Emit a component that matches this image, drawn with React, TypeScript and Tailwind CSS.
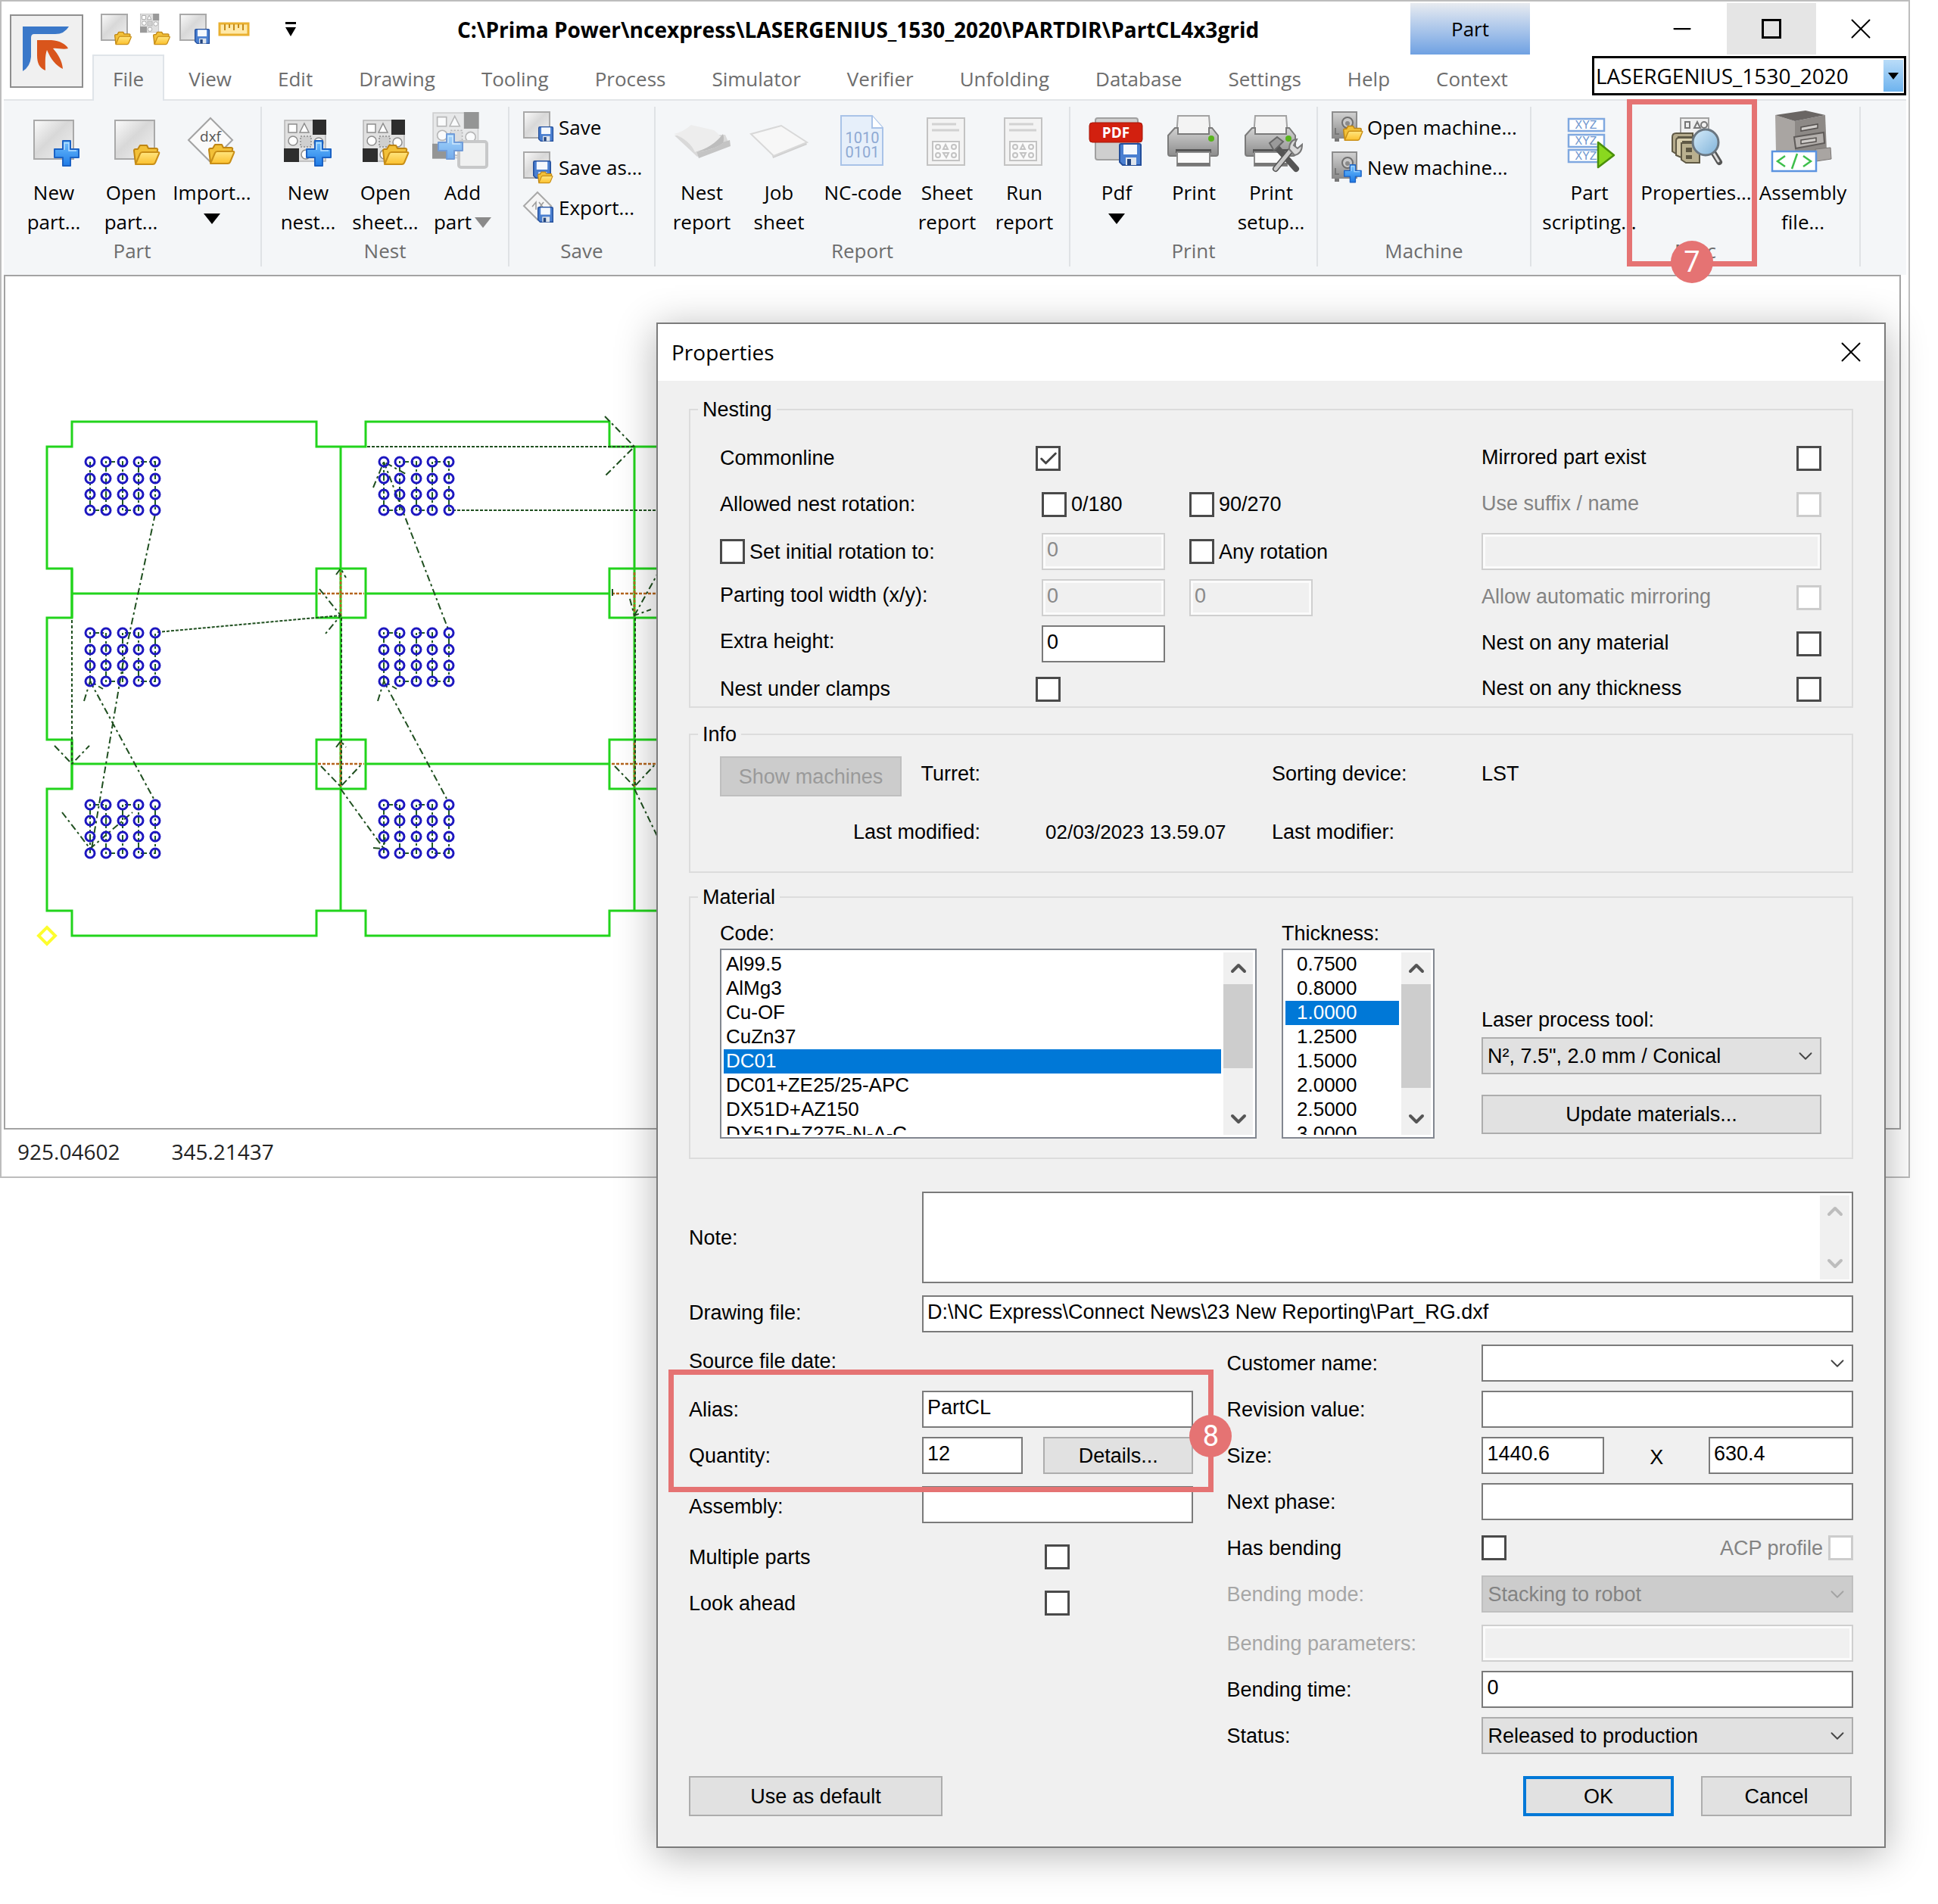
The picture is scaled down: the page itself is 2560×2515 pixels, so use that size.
import type { ReactNode } from 'react';
import { Check, ChevronDown, ChevronUp, Minus, X } from 'lucide-react';
import clsx from 'clsx';

/* ---------- small drawing parts shared by the ribbon icons ---------- */

function SharedDefs() {
  return (
    <svg className="absolute size-0" aria-hidden="true">
      <defs>
        <linearGradient id="sheet" x1="0" y1="0" x2="1" y2="1">
          <stop offset="0" stopColor="#fbfbfb" />
          <stop offset="0.45" stopColor="#d8d8d8" />
          <stop offset="1" stopColor="#f2f2f2" />
        </linearGradient>
        <linearGradient id="blue" x1="0" y1="0" x2="0" y2="1">
          <stop offset="0" stopColor="#6fc0ff" />
          <stop offset="1" stopColor="#1f7be6" />
        </linearGradient>
        <linearGradient id="yellow" x1="0" y1="0" x2="0" y2="1">
          <stop offset="0" stopColor="#ffe680" />
          <stop offset="1" stopColor="#fbc02d" />
        </linearGradient>
        <linearGradient id="metal" x1="0" y1="0" x2="0" y2="1">
          <stop offset="0" stopColor="#d2d2d2" />
          <stop offset="1" stopColor="#8c8c8c" />
        </linearGradient>
        <linearGradient id="lens" x1="0" y1="0" x2="1" y2="1">
          <stop offset="0" stopColor="#d6ecfa" />
          <stop offset="1" stopColor="#7fb2d9" />
        </linearGradient>
      </defs>
    </svg>
  );
}

type GlyphProps = { x: number; y: number; s?: number };

function Plus({ x, y, s = 1 }: GlyphProps) {
  return (
    <g transform={`translate(${x} ${y}) scale(${s})`}>
      <path d="M12 1h10v11h11v11H22v11H12V23H1V12h11Z" fill="url(#blue)" stroke="#1b62c4" strokeWidth="2" strokeLinejoin="round" />
      <path d="M14 13V4h6v10h10" fill="none" stroke="#b5deff" strokeWidth="1.5" />
    </g>
  );
}

function Folder({ x, y, s = 1 }: GlyphProps) {
  return (
    <g transform={`translate(${x} ${y}) scale(${s})`}>
      <path d="M3 26 1 9q0-2 2-2h3l3-5h9l2 4h10q3 0 2 3l-1 4" fill="#f2c038" stroke="#bf8614" strokeWidth="2" strokeLinejoin="round" />
      <path d="M3 27 9 13q1-2 3-2h21q2 0 1 2l-5 12q-1 2-3 2Z" fill="url(#yellow)" stroke="#c98f17" strokeWidth="2" strokeLinejoin="round" />
    </g>
  );
}

function Floppy({ x, y, s = 1 }: GlyphProps) {
  return (
    <g transform={`translate(${x} ${y}) scale(${s})`}>
      <path d="M1 3q0-2 2-2h24q2 0 2 2v26H5l-4-4Z" fill="#4a7fd0" stroke="#244f9b" strokeWidth="2" />
      <rect x="6" y="2" width="18" height="13" fill="#f4f8fd" />
      <rect x="9" y="19" width="14" height="10" fill="#dfe5ec" />
      <rect x="11" y="21" width="5" height="8" fill="#23457f" />
    </g>
  );
}

function Sheet({ x, y, w, h }: { x: number; y: number; w: number; h: number }) {
  return <rect x={x} y={y} width={w} height={h} fill="url(#sheet)" stroke="#a9a9a9" strokeWidth="2" />;
}

function NestGrid({ x, y, s = 1, dark = '#2d2d2d' }: GlyphProps & { dark?: string }) {
  return (
    <g transform={`translate(${x} ${y}) scale(${s})`} fill="#ececec" stroke="#8d8d8d" strokeWidth="1.5">
      <rect x="1" y="1" width="54" height="54" fill="#e0e0e0" stroke="#b5b5b5" />
      <rect x="38" y="0" width="18" height="20" fill={dark} stroke="none" />
      <rect x="0" y="38" width="20" height="18" fill={dark} stroke="none" />
      <rect x="6" y="6" width="11" height="11" fill="#fff" />
      <path d="m27 5 6 12H21Z" fill="#fff" />
      <circle cx="12" cy="28" r="6" fill="#fff" />
      <rect x="22" y="22" width="14" height="14" fill="#cfcfcf" strokeDasharray="2 2" />
      <circle cx="46" cy="30" r="6" fill="#fff" />
      <circle cx="29" cy="46" r="6" fill="#fff" />
    </g>
  );
}

function Printer() {
  return (
    <g>
      <path d="M15 6h41l2 26H13Z" fill="#f3f3f3" stroke="#a2a2a2" strokeWidth="2" />
      <path d="M11 22h4v8h41v-8h4l8 10v24q0 3-3 3H5q-3 0-3-3V32Z" fill="url(#metal)" stroke="#7b7b7b" strokeWidth="2" />
      <rect x="12" y="50" width="47" height="5" fill="#555" />
      <path d="M14 54h43v18H14Z" fill="#fafafa" stroke="#8c8c8c" strokeWidth="2" />
      <path d="M14 68h43v4H14Z" fill="#777" />
      <circle cx="59" cy="36" r="4" fill="#58b41c" />
    </g>
  );
}

function ReportPage() {
  return (
    <g fill="none" stroke="#c3c3c3" strokeWidth="2">
      <rect x="10" y="9" width="49" height="62" fill="#f3f3f3" />
      <path d="M16 17h32M16 25h36" strokeWidth="3" stroke="#d2d2d2" />
      <rect x="17" y="40" width="35" height="25" fill="#fafafa" />
      <circle cx="24" cy="47" r="3" />
      <path d="m34 44 3 6h-6ZM31 55h7l-3 6Z" />
      <circle cx="45" cy="47" r="3" />
      <circle cx="24" cy="58" r="3" />
      <circle cx="45" cy="58" r="3" />
    </g>
  );
}

function MachineBox() {
  return (
    <g>
      <rect x="1" y="1" width="32" height="34" fill="url(#metal)" stroke="#8c8c8c" strokeWidth="2" />
      <path d="M4 36v4h6v-4" fill="#777" />
      <circle cx="21" cy="15" r="7" fill="#c9c9c9" stroke="#6f6f6f" strokeWidth="2" />
      <circle cx="21" cy="16" r="3" fill="#8a8a8a" />
      <path d="M5 22v8h5" stroke="#777" strokeWidth="2" fill="none" />
    </g>
  );
}

const bigIcons: Record<string, ReactNode> = {
  newPart: (<><Sheet x={10} y={12} w={52} h={51} /><Plus x={36} y={38} /></>),
  openPart: (<><Sheet x={15} y={12} w={52} h={51} /><Folder x={39} y={43} /></>),
  import: (
    <>
      <path d="m34 9 29 29-29 29L5 38Z" fill="#fafafa" stroke="#a3a3a3" strokeWidth="2" />
      <text x="34" y="40" textAnchor="middle" fontSize="19" fill="#555" className="font-['Open_Sans',sans-serif]">dxf</text>
      <Folder x={31} y={42} />
    </>
  ),
  newNest: (<><NestGrid x={4} y={11} /><Plus x={33} y={38} /></>),
  openSheet: (<><NestGrid x={6} y={11} /><Folder x={32} y={43} /></>),
  addPart: (
    <g opacity="0.6">
      <NestGrid x={-4} y={1} s={1.1} dark="#555" />
      <rect x="31" y="40" width="37" height="34" rx="3" fill="#eee" stroke="#aaa" strokeWidth="4" />
      <Plus x={3} y={29} />
    </g>
  ),
  nestReport: (
    <g>
      <path d="m0 32 30 28 42-17-5 -12Z" fill="#d9d9d9" />
      <path d="m32 62 42-16-1-8-44 14Z" fill="#c4c4c4" />
      <path d="M-1 30Q12 27 22 18L52 25Q64 34 64 42 50 52 27 54 20 38-1 30Z" fill="#ededed" />
      <path d="M27 54Q52 51 64 42 66 36 64 30 50 48 27 54Z" fill="#bdbdbd" />
    </g>
  ),
  jobSheet: (
    <g>
      <path d="m28 62 45-18-2-4-44 18Z" fill="#cfcfcf" />
      <path d="m-1 30 40-11 34 22-44 18Z" fill="#f7f7f7" stroke="#d8d8d8" strokeWidth="2" />
    </g>
  ),
  ncCode: (
    <g>
      <path d="M7 6h41l14 16v49H7Z" fill="#e6effa" stroke="#a9c3e8" strokeWidth="2" />
      <path d="M48 6v16h14" fill="#fff" stroke="#a9c3e8" strokeWidth="2" />
      <text x="35" y="42" textAnchor="middle" fontSize="20" fill="#8ea9d3" className="font-['Roboto',sans-serif]">1010</text>
      <text x="35" y="61" textAnchor="middle" fontSize="20" fill="#8ea9d3" className="font-['Roboto',sans-serif]">0101</text>
    </g>
  ),
  report: <ReportPage />,
  pdf: (
    <>
      <rect x="8" y="9" width="56" height="55" rx="3" fill="#cfcfcf" stroke="#a0a0a0" strokeWidth="2" />
      <rect x="0" y="15" width="70" height="26" rx="4" fill="#d2200f" stroke="#a51608" strokeWidth="1" />
      <text x="35" y="35" textAnchor="middle" fontSize="19" fontWeight="700" fill="#fff" className="font-['Open_Sans',sans-serif]">PDF</text>
      <Floppy x={39} y={42} />
    </>
  ),
  print: <Printer />,
  printSetup: (
    <>
      <Printer />
      <path d="m42 76 22-27M42 46l27 30" stroke="#555" strokeWidth="8" strokeLinecap="round" />
      <path d="m42 76 22-27" stroke="#c9c9c9" strokeWidth="5" strokeLinecap="round" />
      <path d="M60 50q0-12 10-13l-4 8 5 4 6-5q0 12-10 14Z" fill="#d9d9d9" stroke="#777" strokeWidth="2" />
      <path d="m34 42 10-8 8 6-12 12Z" fill="#9a9a9a" stroke="#666" strokeWidth="2" />
    </>
  ),
  scripting: (
    <>
      {[10, 31, 51].map((y) => (
        <g key={y}>
          <rect x="8" y={y} width="47" height="16" fill="#fff" stroke="#7fa8e0" strokeWidth="2.5" />
          <text x="31" y={y + 13} textAnchor="middle" fontSize="16" fill="#6f97cf" className="font-['Liberation_Mono',monospace]">XYZ</text>
        </g>
      ))}
      <path d="m47 41 21 17-21 16Z" fill="#8ad81f" stroke="#4a8f0b" strokeWidth="2.5" strokeLinejoin="round" />
    </>
  ),
  properties: (
    <>
      <rect x="15" y="9" width="37" height="30" fill="#efefef" stroke="#a2a2a2" strokeWidth="2" />
      <path d="M21 14h6v8h-6Zm12 8 4-8 4 8Z" fill="none" stroke="#777" strokeWidth="2" />
      <circle cx="46" cy="18" r="4" fill="none" stroke="#777" strokeWidth="2" />
      <path d="M4 34q0-5 5-5h22v5H12v24l-8-5Z" fill="#b5ab8c" stroke="#5f5945" strokeWidth="2" />
      <path d="M9 39q0-4 4-4h22v5H18v22l-9-4Z" fill="#d8cfae" stroke="#5f5945" strokeWidth="2" />
      <path d="M16 42h24v26H22l-6-4Z" fill="#b9b08f" stroke="#5f5945" strokeWidth="2" />
      <rect x="22" y="48" width="8" height="6" fill="#5d5743" />
      <rect x="22" y="58" width="8" height="5" fill="#5d5743" />
      <path d="m58 54 8 13" stroke="#555" strokeWidth="8" strokeLinecap="round" />
      <path d="m59 56 6 10" stroke="#ddd" strokeWidth="3" strokeLinecap="round" />
      <circle cx="48" cy="41" r="17" fill="url(#lens)" stroke="#6a7680" strokeWidth="3" />
    </>
  ),
  assembly: (
    <>
      <path d="M-1 5 25 13v49l-25-8Z" fill="#a9a5a2" />
      <path d="M25 13 65 5l2 47-42 10Z" fill="#8d8986" />
      <path d="M-1 5 39-1l26 6-40 8Z" fill="#6a6664" />
      <path d="m52 50 20-2 1 15-20 3Z" fill="#a9a5a2" stroke="#7a7674" strokeWidth="1" />
      <path d="m24 34 39-6 1 14-38 7Z" fill="#b3afac" stroke="#5f5b59" strokeWidth="2" />
      <path d="m33 21 22-4v5l-22 4Zm0 17 20-3v5l-20 3Z" fill="#d0cdca" stroke="#55514f" strokeWidth="1.5" />
      <rect x="-5" y="53" width="58" height="26" fill="#fff" stroke="#5b93e0" strokeWidth="2.5" />
      <path d="M12 59 2 66l10 7m24-14 10 7-10 7M28 56l-7 20" fill="none" stroke="#3fbf4c" strokeWidth="2.5" />
    </>
  ),
};

const smallIcons: Record<string, ReactNode> = {
  open: (<><Sheet x={1} y={1} w={34} h={34} /><Folder x={18} y={23} s={0.65} /></>),
  nestOpen: (
    <>
      <NestGrid x={0} y={0} s={0.45} dark="#9a9a9a" />
      <Folder x={17} y={23} s={0.65} />
    </>
  ),
  save: (<><Sheet x={1} y={1} w={34} h={34} /><Floppy x={20} y={20} s={0.67} /></>),
  saveAs: (
    <>
      <Sheet x={1} y={1} w={34} h={34} />
      <Floppy x={13} y={12} s={0.8} />
      <Folder x={19} y={26} s={0.58} />
    </>
  ),
  export: (
    <>
      <path d="m19 1 18 18-18 18L1 19Z" fill="#f5f5f5" stroke="#a8a8a8" strokeWidth="2" />
      <path d="m12 20 5-6v10m4-10 6 8m0-8-6 8" stroke="#9a9a9a" strokeWidth="1.5" fill="none" />
      <Floppy x={19} y={20} s={0.7} />
    </>
  ),
  machineOpen: (<><MachineBox /><Folder x={15} y={18} s={0.75} /></>),
  machineNew: (<><MachineBox /><Plus x={16} y={17} s={0.7} /></>),
  ruler: (
    <>
      <rect x="1" y="13" width="38" height="15" fill="#ffe9a8" stroke="#e9b030" strokeWidth="3" />
      <path d="M8 14v8m6-8v5m6-5v8m6-8v5m6-5v8" stroke="#c48a1a" strokeWidth="2" />
    </>
  ),
};

function SmallIcon({ name }: { name: string }) {
  return (
    <svg width="40" height="42" viewBox="0 0 40 42" className="shrink-0 overflow-visible">
      {smallIcons[name]}
    </svg>
  );
}

/* ---------- ribbon ---------- */

type BigButtonProps = {
  icon: string;
  lines: [string, string?];
  width?: string;
  menu?: 'black' | 'gray';
  marked?: string;
};

function BigButton({ icon, lines, width = 'w-[102px]', menu, marked }: BigButtonProps) {
  const arrow = (
    <svg width="22" height="14" viewBox="0 0 22 14">
      <path d="M0 0h22L11 14Z" fill={menu === 'gray' ? '#8a8a8a' : '#000'} />
    </svg>
  );
  return (
    <div className={clsx('relative', width)}>
      <button className="flex w-full flex-col items-center whitespace-nowrap leading-[39px] text-black">
        <svg width="72" height="80" viewBox="0 0 72 80" className="mb-2 overflow-visible">
          {bigIcons[icon]}
        </svg>
        <span>{lines[0]}</span>
        {lines[1] ? (
          <span className="flex items-center gap-1">
            {lines[1]}
            {menu && arrow}
          </span>
        ) : (
          menu && <span className="py-2">{arrow}</span>
        )}
      </button>
      {marked && (
        <div className="pointer-events-none absolute -top-4 -right-[10px] -left-[21px] z-10 h-[221px] border-[7px] border-[#e57373]">
          <Badge className="-bottom-[29px] left-1/2 -translate-x-1/2">{marked}</Badge>
        </div>
      )}
    </div>
  );
}

function SmallButton({ icon, children }: { icon: string; children: ReactNode }) {
  return (
    <button className="flex h-[53px] items-center gap-[7px] whitespace-nowrap text-black">
      <SmallIcon name={icon} />
      {children}
    </button>
  );
}

function Group({ label, className, children }: { label: string; className: string; children: ReactNode }) {
  return (
    <section className="flex flex-col border-r-2 border-[#dfe2e5]">
      <div className={clsx('flex h-[174px]', className)}>{children}</div>
      <h2 className="text-center leading-[32px] text-[#6d6d6d]">{label}</h2>
    </section>
  );
}

function Badge({ className, children }: { className: string; children: ReactNode }) {
  return (
    <span className={clsx('absolute flex size-14 items-center justify-center rounded-full bg-[#e57373] font-["Roboto",sans-serif] text-[38px] text-white', className)}>
      {children}
    </span>
  );
}

const tabs = ['File', 'View', 'Edit', 'Drawing', 'Tooling', 'Process', 'Simulator', 'Verifier', 'Unfolding', 'Database', 'Settings', 'Help', 'Context'];

function Header() {
  return (
    <header className="flex">
      <div className="w-[120px] shrink-0 pt-[17px] pl-[11px]">
        <button aria-label="Application menu" className="block size-[97px] border-2 border-[#8f8f8f] bg-[#f0f0f0]">
          <svg viewBox="2 2 93 93">
            <path d="M17 16H78Q72 26 60 26H32Q28 26 28 31V56Q27 69 17 75Z" fill="#3a78c9" />
            <path d="M36 34H55C66 35 74 39 77 45 70 47 63 44 57 45 64 53 69 61 70 72 61 68 54 59 49 47 46 55 47 66 47 74 39 71 36 64 36 54Z" fill="#d9551c" />
          </svg>
        </button>
      </div>
      <div className="min-w-0 grow">
        <div className="flex h-[70px] pt-[2px]">
          <div className="flex w-[482px] items-center gap-3 pt-[2px] pl-[11px]">
            {['open', 'nestOpen', 'save', 'ruler'].map((name) => (
              <button key={name} aria-label={name}>
                <SmallIcon name={name} />
              </button>
            ))}
            <button aria-label="Customize toolbar" className="ml-9">
              <svg width="14" height="20" viewBox="0 0 14 20">
                <path d="M0 0h14v3H0Zm0 7h14L7 19Z" />
              </svg>
            </button>
          </div>
          <h1 className="flex grow items-center pt-[2px] text-[28px] font-bold whitespace-nowrap">
            C:\Prima Power\ncexpress\LASERGENIUS_1530_2020\PARTDIR\PartCL4x3grid
          </h1>
          <div className="flex w-[158px] shrink-0 items-center justify-center bg-linear-to-b from-[#e8ebf0] to-[#6fa1e2]">Part</div>
          <div className="flex w-[500px] shrink-0 justify-end pr-1">
            <button aria-label="Minimize" className="flex w-[118px] items-center justify-center">
              <Minus size={36} strokeWidth={1.5} />
            </button>
            <button aria-label="Maximize" className="flex w-[118px] items-center justify-center bg-[#e5e5e5]">
              <span className="size-[26px] border-[3px] border-black" />
            </button>
            <button aria-label="Close" className="flex w-[118px] items-center justify-center">
              <X size={46} strokeWidth={1} />
            </button>
          </div>
        </div>
        <div className="flex h-[59px] items-start">
          <nav className="flex gap-[3px] leading-[60px]">
            {tabs.map((tab, i) => (
              <button
                key={tab}
                className={clsx(
                  'relative h-[61px] text-[#6d6d6d]',
                  i === 0 ? 'z-10 border-2 border-b-0 border-[#dfe4e9] bg-[#f4f6f8] px-[25px]' : 'px-[29px] pt-[2px]',
                )}
              >
                {tab}
              </button>
            ))}
          </nav>
          <div className="relative mt-[2px] mr-[3px] ml-auto w-[415px]">
            <select aria-label="Machine" className="block h-[52px] w-full appearance-none border-[3px] border-black bg-white pl-[2px] text-[28px] leading-[38px]">
              <option>LASERGENIUS_1530_2020</option>
            </select>
            <span className="pointer-events-none absolute inset-y-[5px] right-1 flex w-[26px] items-center justify-center bg-linear-to-b from-[#b9dcf8] to-[#6db3ee]">
              <svg width="14" height="9" viewBox="0 0 14 9">
                <path d="M0 0h14L7 9Z" />
              </svg>
            </span>
          </div>
        </div>
      </div>
    </header>
  );
}

function Ribbon() {
  return (
    <div className="mx-[3px] flex h-[232px] border-t-2 border-[#e2e5e8] bg-[#f4f6f8] pt-2 pb-[11px]">
      <Group label="Part" className="pt-[6px] pr-2 pl-[15px]">
        <BigButton icon="newPart" lines={['New', 'part...']} />
        <BigButton icon="openPart" lines={['Open', 'part...']} />
        <BigButton icon="import" lines={['Import...']} width="w-[112px]" menu="black" />
      </Group>
      <Group label="Nest" className="pt-[6px] pr-[9px] pl-[10px]">
        <BigButton icon="newNest" lines={['New', 'nest...']} />
        <BigButton icon="openSheet" lines={['Open', 'sheet...']} />
        <BigButton icon="addPart" lines={['Add', 'part']} menu="gray" />
      </Group>
      <Group label="Save" className="w-[191px] flex-col pl-[18px]">
        <SmallButton icon="save">Save</SmallButton>
        <SmallButton icon="saveAs">Save as...</SmallButton>
        <SmallButton icon="export">Export...</SmallButton>
      </Group>
      <Group label="Report" className="pt-[6px] pr-2 pl-[10px]">
        <BigButton icon="nestReport" lines={['Nest', 'report']} />
        <BigButton icon="jobSheet" lines={['Job', 'sheet']} />
        <BigButton icon="ncCode" lines={['NC-code']} width="w-[120px]" />
        <BigButton icon="report" lines={['Sheet', 'report']} />
        <BigButton icon="report" lines={['Run', 'report']} />
      </Group>
      <Group label="Print" className="pt-[6px] pr-[9px] pl-[10px]">
        <BigButton icon="pdf" lines={['Pdf']} menu="black" />
        <BigButton icon="print" lines={['Print']} />
        <BigButton icon="printSetup" lines={['Print', 'setup...']} />
      </Group>
      <Group label="Machine" className="w-[280px] flex-col pl-[18px]">
        <SmallButton icon="machineOpen">Open machine...</SmallButton>
        <SmallButton icon="machineNew">New machine...</SmallButton>
      </Group>
      <Group label="Misc" className="pt-[6px] pr-1 pl-[6px]">
        <BigButton icon="scripting" lines={['Part', 'scripting...']} width="w-[141px]" />
        <BigButton icon="properties" lines={['Properties...']} width="w-[141px]" marked="7" />
        <BigButton icon="assembly" lines={['Assembly', 'file...']} width="w-[141px]" />
      </Group>
    </div>
  );
}

/* ---------- part drawing ---------- */

const holeX = [119, 140, 162, 183, 205];
const holeRows = [
  [611, 633, 654, 675],
  [837, 859, 880, 901],
  [1064, 1085, 1106, 1128],
];
const partPitch = 388;

function HoleGrid({ dx, rows, flip }: { dx: number; rows: number[]; flip: boolean }) {
  const top = rows[0];
  const bottom = rows[3];
  const path = holeX
    .map((x, i) => {
      const down = flip ? i % 2 === 1 : i % 2 === 0;
      return `${i ? 'L' : 'M'}${x + dx} ${down ? top : bottom}V${down ? bottom : top}`;
    })
    .join('');
  return (
    <g fill="none">
      <path d={path} stroke="#1f5c1f" strokeWidth="2" strokeDasharray="8 3 3 3" />
      {holeX.map((x) => rows.map((y) => <circle key={`${x}-${y}`} cx={x + dx} cy={y} r="6" stroke="#1d17c0" strokeWidth="3" />))}
    </g>
  );
}

function PartCanvas() {
  return (
    <div className="mr-[10px] ml-[3px] overflow-hidden border-2 border-[#a3a3a3] bg-white">
      <svg className="block h-[1125px] w-full">
        <g transform="translate(-7 -366)" fill="none">
          <g stroke="#22d41c" strokeWidth="3">
            <path d="M62 591H95V558H418V591H483V558H805V591H1193V1204H805V1237H483V1204H418V1237H95V1204H62V1043H95V978H62V817H95V752H62Z" />
            <path d="M450 591V1204M838 591V1204M95 785H418M483 785H805M95 1010H418M483 1010H805" />
            <path d="M418 752h65v65h-65ZM418 978h65v65h-65ZM805 752h65v65h-65ZM805 978h65v65h-65Z" />
            <path d="M95 752V817M95 978V1043" />
          </g>
          {[0, partPitch].map((dx) => (
            <g key={dx} stroke="#b5651d" strokeWidth="2.5" strokeDasharray="4 2">
              <path d={`M${420 + dx} 785H${481 + dx}M${450 + dx} 757V815M${420 + dx} 1010H${481 + dx}M${450 + dx} 982V1040`} />
            </g>
          ))}
          <g stroke="#1f4f1f" strokeWidth="2" strokeDasharray="5 3">
            <path d="M485 591H838M592 675H880" strokeDasharray="4 2" />
            <path d="M95 820V1010M451 817V1040M839 817V1040" strokeDasharray="4 3" />
            <path d="M208 836L450 814" strokeDasharray="4 2" />
          </g>
          <g stroke="#1f4f1f" strokeWidth="2" strokeDasharray="9 4 3 4">
            <path d="M205 680L162 880 121 1122M119 901L203 1056M507 901L590 1056M507 611L592 832M450 1043L507 1122M838 1043L880 1130" />
            <path d="M799 551L838 591 799 630M72 986L95 1010 118 986M82 1074L119 1122 175 1074" />
            <path d="M422 779L450 814 430 838M424 1013L450 1040 478 1010M812 1013L838 1040 866 1010M809 779V792M838 814L868 760" />
            <path d="M493 645L507 611 536 627M111 927L119 901 136 911M499 927L507 901 524 911M493 1121L507 1122 509 1104" />
            <path d="M444 760L450 752 457 764M444 988L450 980 457 988M832 792L838 814 860 806" />
          </g>
          {holeRows.map((rows, i) =>
            [0, partPitch].map((dx) => <HoleGrid key={`${i}-${dx}`} dx={dx} rows={rows} flip={i > 0} />),
          )}
          <path d="m62 1226 11 11-11 11-11-11Z" stroke="#fdfd2e" strokeWidth="4" />
        </g>
      </svg>
    </div>
  );
}

function MainWindow() {
  return (
    <main className="col-start-1 row-start-1 mr-[37px] self-start border-2 border-[#bdbdbd] bg-white font-['Open_Sans','Noto_Sans',sans-serif] text-[26px] leading-[30px] text-black">
      <Header />
      <Ribbon />
      <PartCanvas />
      <footer className="flex h-[62px] items-center gap-[68px] pb-1 pl-[21px] text-[28px] text-[#222]">
        <span>925.04602</span>
        <span>345.21437</span>
      </footer>
    </main>
  );
}

/* ---------- dialog controls ---------- */

function Tick({ id, disabled, checked }: { id: string; disabled?: boolean; checked?: boolean }) {
  return (
    <span className="relative flex size-[33px] shrink-0">
      <input
        id={id}
        type="checkbox"
        disabled={disabled}
        defaultChecked={checked}
        className="peer size-[33px] appearance-none border-[3px] border-[#4a4a4a] bg-white disabled:border-[#cccccc]"
      />
      <Check size={28} strokeWidth={2.5} className="pointer-events-none absolute top-[3px] left-[3px] hidden text-[#444] peer-checked:block" />
    </span>
  );
}

function Edit({ id, value, disabled, className, label }: { id: string; value?: string; disabled?: boolean; className?: string; label?: string }) {
  return (
    <input
      id={id}
      type="text"
      aria-label={label}
      disabled={disabled}
      defaultValue={value}
      className={clsx(
        'h-[49px] min-w-0 border-2 px-[5px] pb-1',
        disabled ? 'border-[#cfcfcf] bg-[#f0f0f0] text-[#8a8a8a] shadow-[inset_0_0_0_3px_#fbfbfb]' : 'border-[#7a7a7a] bg-white text-black',
        className,
      )}
    />
  );
}

function Combo({ id, value, look, className }: { id: string; value?: string; look: 'white' | 'gray' | 'off'; className?: string }) {
  return (
    <span className={clsx('relative flex', className)}>
      <select
        id={id}
        disabled={look === 'off'}
        className={clsx(
          'h-[49px] w-full appearance-none border-2 px-[6px] opacity-100',
          look === 'white' && 'border-[#7a7a7a] bg-white',
          look === 'gray' && 'border-[#adadad] bg-[#e1e1e1] text-black',
          look === 'off' && 'border-[#bfbfbf] bg-[#cccccc] text-[#838383]',
        )}
      >
        <option>{value}</option>
      </select>
      <ChevronDown size={30} strokeWidth={1.5} className={clsx('pointer-events-none absolute top-[10px] right-[6px]', look === 'off' ? 'text-[#a3a3a3]' : 'text-[#444]')} />
    </span>
  );
}

function PushButton({ children, className, disabled }: { children: ReactNode; className?: string; disabled?: boolean }) {
  return (
    <button
      type="button"
      disabled={disabled}
      className={clsx(
        'border-2',
        disabled ? 'border-[#bfbfbf] bg-[#cccccc] text-[#9a9a9a]' : 'bg-[#e1e1e1] text-black',
        className,
      )}
    >
      {children}
    </button>
  );
}

function ScrollBar({ thumb, off }: { thumb?: string; off?: boolean }) {
  return (
    <div className={clsx('flex w-[39px] shrink-0 flex-col bg-[#f0f0f0]', off ? 'text-[#bdbdbd]' : 'text-[#555]')}>
      <ChevronUp size={32} strokeWidth={3} className="mx-auto my-[5px] shrink-0" />
      <div className="grow">{thumb && <div className={clsx('bg-[#cdcdcd]', thumb)} />}</div>
      <ChevronDown size={32} strokeWidth={3} className="mx-auto my-[5px] shrink-0" />
    </div>
  );
}

function ListBox({ id, items, selected, thumb, indent }: { id: string; items: string[]; selected: string; thumb: string; indent: string }) {
  return (
    <div className="mt-[5px] flex h-[251px] border-2 border-[#828790] bg-white p-[3px] text-[26px]">
      <select id={id} size={8} defaultValue={selected} className="mr-[3px] h-full min-w-0 grow appearance-none overflow-hidden bg-none leading-8 outline-none">
        {items.map((item) => (
          <option
            key={item}
            value={item}
            className={clsx(
              'h-8 min-h-8 py-0 pr-0 leading-8 checked:bg-linear-to-b checked:from-[#0078d7] checked:to-[#0078d7] checked:[-webkit-text-fill-color:#fff]',
              indent,
            )}
          >
            {item}
          </option>
        ))}
      </select>
      <ScrollBar thumb={thumb} />
    </div>
  );
}

function Panel({ title, className, children }: { title: string; className: string; children: ReactNode }) {
  return (
    <fieldset className={clsx('min-w-0 border-2 border-[#dcdcdc] pr-10 pl-[39px]', className)}>
      <legend className="-ml-[29px] px-[6px] leading-[30px]">{title}</legend>
      {children}
    </fieldset>
  );
}

/* ---------- dialog sections ---------- */

const codes = ['Al99.5', 'AlMg3', 'Cu-OF', 'CuZn37', 'DC01', 'DC01+ZE25/25-APC', 'DX51D+AZ150', 'DX51D+Z275-N-A-C'];
const thicknesses = ['0.7500', '0.8000', '1.0000', '1.2500', '1.5000', '2.0000', '2.5000', '3.0000'];

const nestRow = 'grid h-[46px] grid-cols-[417fr_203fr_386fr_449fr] items-center';

function Nesting() {
  return (
    <Panel title="Nesting" className="flex flex-col gap-[15px]">
      <div className={clsx(nestRow, 'mt-[26px]')}>
        <label htmlFor="commonline">Commonline</label>
        <Tick id="commonline" checked />
        <span />
        <span className="flex justify-between">
          <label htmlFor="mirrored">Mirrored part exist</label>
          <Tick id="mirrored" />
        </span>
      </div>
      <div className={nestRow}>
        <span>Allowed nest rotation:</span>
        <span className="flex items-center gap-[6px] pl-2">
          <Tick id="rot0" />
          <label htmlFor="rot0">0/180</label>
        </span>
        <span className="flex items-center gap-[6px]">
          <Tick id="rot90" />
          <label htmlFor="rot90">90/270</label>
        </span>
        <span className="flex justify-between text-[#838383]">
          <label htmlFor="suffix">Use suffix / name</label>
          <Tick id="suffix" disabled />
        </span>
      </div>
      <div className={nestRow}>
        <span className="flex items-center gap-[6px]">
          <Tick id="setInitial" />
          <label htmlFor="setInitial">Set initial rotation to:</label>
        </span>
        <span className="flex pl-2">
          <Edit id="initial" label="Initial rotation" value="0" disabled className="w-[163px]" />
        </span>
        <span className="flex items-center gap-[6px]">
          <Tick id="rotAny" />
          <label htmlFor="rotAny">Any rotation</label>
        </span>
        <Edit id="suffixName" label="Suffix or name" disabled />
      </div>
      <div className={nestRow}>
        <label htmlFor="toolX" className="pb-2">Parting tool width (x/y):</label>
        <span className="flex pl-2">
          <Edit id="toolX" value="0" disabled className="w-[163px]" />
        </span>
        <Edit id="toolY" label="Parting tool width y" value="0" disabled className="w-[163px]" />
        <span className="flex justify-between text-[#838383]">
          <label htmlFor="autoMirror">Allow automatic mirroring</label>
          <Tick id="autoMirror" disabled />
        </span>
      </div>
      <div className={nestRow}>
        <label htmlFor="extra" className="pb-2">Extra height:</label>
        <span className="flex pl-2">
          <Edit id="extra" value="0" className="w-[163px]" />
        </span>
        <span />
        <span className="flex justify-between">
          <label htmlFor="anyMaterial">Nest on any material</label>
          <Tick id="anyMaterial" />
        </span>
      </div>
      <div className={nestRow}>
        <label htmlFor="clamps">Nest under clamps</label>
        <Tick id="clamps" />
        <span />
        <span className="flex justify-between">
          <label htmlFor="anyThickness">Nest on any thickness</label>
          <Tick id="anyThickness" />
        </span>
      </div>
    </Panel>
  );
}

function Info() {
  return (
    <Panel title="Info" className="mt-5 pt-[14px] pb-[37px]">
      <div className="grid grid-cols-[430fr_299fr_277fr_449fr] leading-[46px]">
        <div className="flex justify-between pr-[86px]">
          <PushButton disabled className="h-[53px] w-[240px]">Show machines</PushButton>
          <span>Turret:</span>
        </div>
        <span />
        <span>Sorting device:</span>
        <span>LST</span>
      </div>
      <div className="mt-8 grid grid-cols-[430fr_299fr_277fr_449fr] leading-[30px]">
        <span className="pr-[86px] text-right">Last modified:</span>
        <span className="text-[26px]">02/03/2023 13.59.07</span>
        <span>Last modifier:</span>
      </div>
    </Panel>
  );
}

function Material() {
  return (
    <Panel title="Material" className="mt-[17px] pt-[18px] pb-[25px]">
      <div className="grid grid-cols-[709fr_33fr_202fr_62fr_449fr]">
        <div>
          <label htmlFor="code" className="block">Code:</label>
          <ListBox id="code" items={codes} selected="DC01" thumb="h-[111px]" indent="pl-[3px]" />
        </div>
        <span />
        <div>
          <label htmlFor="thickness" className="block">Thickness:</label>
          <ListBox id="thickness" items={thicknesses} selected="1.0000" thumb="h-[137px]" indent="pl-[15px]" />
        </div>
        <span />
        <div className="flex flex-col justify-end pb-[6px]">
          <label htmlFor="laser">Laser process tool:</label>
          <Combo id="laser" look="gray" value={'N², 7.5", 2.0 mm / Conical'} className="mt-2" />
          <PushButton className="mt-[27px] h-[52px] border-[#adadad]">Update materials...</PushButton>
        </div>
      </div>
    </Panel>
  );
}

function LeftFields() {
  return (
    <div className="flex min-w-0 flex-col gap-3">
      <div className="h-[49px] leading-[44px]">Source file date:</div>
      <div className="relative flex flex-col gap-3">
        <div className="flex items-center">
          <label htmlFor="alias" className="w-[308px] shrink-0">Alias:</label>
          <Edit id="alias" value="PartCL" className="grow" />
        </div>
        <div className="flex items-center">
          <label htmlFor="quantity" className="w-[308px] shrink-0">Quantity:</label>
          <Edit id="quantity" value="12" className="w-[133px]" />
          <PushButton className="ml-[27px] h-[49px] grow border-[#adadad]">Details...</PushButton>
        </div>
        <div className="pointer-events-none absolute -inset-x-[27px] -top-[28px] -bottom-6 z-10 border-[7px] border-[#e57373]">
          <Badge className="top-[53px] -right-[31px]">8</Badge>
        </div>
      </div>
      <div className="mt-1 flex items-center">
        <label htmlFor="assembly" className="w-[308px] shrink-0 pt-1">Assembly:</label>
        <Edit id="assembly" className="grow" />
      </div>
      <div className="mt-4 flex items-center">
        <label htmlFor="multiple" className="w-[470px] shrink-0">Multiple parts</label>
        <Tick id="multiple" />
      </div>
      <div className="mt-4 flex items-center">
        <label htmlFor="ahead" className="w-[470px] shrink-0">Look ahead</label>
        <Tick id="ahead" />
      </div>
    </div>
  );
}

function Line({ id, label, off, className, children }: { id: string; label: string; off?: boolean; className?: string; children: ReactNode }) {
  return (
    <div className={clsx('flex h-[49px] items-center', className)}>
      <label htmlFor={id} className={clsx('w-[337px] shrink-0', off && 'text-[#a6a6a6]')}>{label}</label>
      {children}
    </div>
  );
}

function RightFields() {
  return (
    <div className="flex min-w-0 flex-col gap-3">
      <Line id="customer" label="Customer name:">
        <Combo id="customer" look="white" className="grow" />
      </Line>
      <Line id="revision" label="Revision value:">
        <Edit id="revision" className="grow" />
      </Line>
      <Line id="sizeX" label="Size:">
        <Edit id="sizeX" value="1440.6" className="w-[162px]" />
        <span className="grow pt-1 text-center">X</span>
        <Edit id="sizeY" label="Size y" value="630.4" className="w-[191px]" />
      </Line>
      <Line id="phase" label="Next phase:">
        <Edit id="phase" className="grow" />
      </Line>
      <Line id="bending" label="Has bending">
        <Tick id="bending" />
        <label htmlFor="acp" className="mr-[7px] ml-auto text-[#838383]">ACP profile</label>
        <Tick id="acp" disabled />
      </Line>
      <Line id="mode" label="Bending mode:" off>
        <Combo id="mode" look="off" value="Stacking to robot" className="grow" />
      </Line>
      <Line id="params" label="Bending parameters:" off className="mt-1">
        <Edit id="params" disabled className="grow" />
      </Line>
      <Line id="time" label="Bending time:">
        <Edit id="time" value="0" className="grow" />
      </Line>
      <Line id="status" label="Status:">
        <Combo id="status" look="gray" value="Released to production" className="grow" />
      </Line>
    </div>
  );
}

function PropertiesDialog() {
  return (
    <div
      role="dialog"
      aria-labelledby="dialogTitle"
      className="z-10 col-start-1 row-start-1 mt-[426px] mr-[69px] mb-[72px] ml-[867px] self-start border-2 border-[#7b7b7b] bg-[#f0f0f0] font-['Liberation_Sans',Arial,sans-serif] text-[27px] leading-[30px] text-black shadow-[0_8px_50px_rgba(0,0,0,0.3)]"
    >
      <div className="flex h-[75px] items-center justify-between bg-white pr-[21px] pb-[2px] pl-[18px]">
        <h2 id="dialogTitle" className="font-['Open_Sans','Noto_Sans',sans-serif] text-[28px]">Properties</h2>
        <button aria-label="Close">
          <X size={46} strokeWidth={1} />
        </button>
      </div>
      <form className="px-[41px] pt-[23px] pb-10">
        <Nesting />
        <Info />
        <Material />
        <div className="mt-[43px] flex items-center">
          <label htmlFor="note" className="w-[308px] shrink-0">Note:</label>
          <div className="flex h-[121px] grow border-2 border-[#7a7a7a] bg-white p-[3px]">
            <textarea id="note" className="grow resize-none outline-none" />
            <ScrollBar off />
          </div>
        </div>
        <div className="mt-4 flex items-center">
          <label htmlFor="drawing" className="w-[308px] shrink-0 pb-1">Drawing file:</label>
          <Edit id="drawing" value="D:\NC Express\Connect News\23 New Reporting\Part_RG.dxf" className="grow" />
        </div>
        <div className="mt-4 grid grid-cols-[666fr_827fr] gap-x-11">
          <LeftFields />
          <RightFields />
        </div>
        <div className="mt-[29px] flex h-[53px]">
          <PushButton className="w-[335px] border-[#adadad]">Use as default</PushButton>
          <PushButton className="ml-auto w-[199px] border-[4px] border-[#0078d7]">OK</PushButton>
          <PushButton className="mr-[2px] ml-9 w-[199px] border-[#adadad]">Cancel</PushButton>
        </div>
      </form>
    </div>
  );
}

export default function App() {
  return (
    <div className="grid min-h-screen bg-white">
      <SharedDefs />
      <MainWindow />
      <PropertiesDialog />
    </div>
  );
}
